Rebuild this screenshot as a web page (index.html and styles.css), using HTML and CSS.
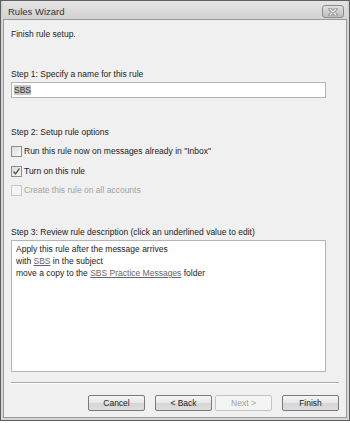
FILE: index.html
```html
<!DOCTYPE html>
<html lang="en">
<head>
  <meta charset="UTF-8">
  <title>Rules Wizard</title>
  <link rel="stylesheet" href="styles.css">
</head>
<body>

  <div class="window">
    <div class="titlebar">
      <div class="title">Rules Wizard</div>
      <div class="close">
        <svg width="10" height="8" viewBox="0 0 10 8">
          <path d="M2 1 L8 7 M8 1 L2 7" stroke="#7a7a7a" stroke-width="3" stroke-linecap="round"/>
          <path d="M2 1 L8 7 M8 1 L2 7" stroke="#ffffff" stroke-width="1.4" stroke-linecap="round"/>
        </svg>
      </div>
    </div>

    <div class="client">
      <div class="intro">Finish rule setup.</div>

      <div class="label step1">Step 1: Specify a name for this rule</div>
      <div class="textbox"><span class="selected">SBS</span></div>

      <div class="label step2">Step 2: Setup rule options</div>
      <div class="check first">
        <span class="box"></span>
        <span>Run this rule now on messages already in "Inbox"</span>
      </div>
      <div class="check">
        <span class="box">
          <svg width="9" height="9" viewBox="0 0 9 9">
            <path d="M1.5 4.5 L3.5 7 L7.5 1.5" stroke="#555" stroke-width="1.3" fill="none"/>
          </svg>
        </span>
        <span>Turn on this rule</span>
      </div>
      <div class="check disabled">
        <span class="box"></span>
        <span>Create this rule on all accounts</span>
      </div>

      <div class="label step3">Step 3: Review rule description (click an underlined value to edit)</div>
      <div class="description">
        <div>Apply this rule after the message arrives</div>
        <div>with <span class="link">SBS</span> in the subject</div>
        <div>move a copy to the <span class="link">SBS Practice Messages</span> folder</div>
      </div>

      <div class="separator"></div>

      <div class="buttons">
        <div class="btn">Cancel</div>
        <div class="btn gap">&lt; Back</div>
        <div class="btn disabled">Next &gt;</div>
        <div class="btn gap">Finish</div>
      </div>
    </div>
  </div>

</body>
</html>
```

FILE: styles.css
```css
body {
  margin: 0;
  background: #ffffff;
  font-family: "Liberation Sans", Arial, sans-serif;
  font-size: 8.5px;
  color: #222;
}
.window {
  box-sizing: border-box;
  width: 350px;
  height: 421px;
  border: 1px solid #5e5e5e;
  background: #d4d4d4;
  padding: 0 2px 2px 2px;
  display: flex;
  flex-direction: column;
}
.titlebar {
  height: 18px;
  display: flex;
  align-items: center;
  justify-content: space-between;
  background: linear-gradient(#e4e4e4, #d2d2d2);
  padding: 0 3px 0 5px;
}
.title {
  font-size: 9.5px;
  color: #333;
  padding-top: 2px;
}
.close {
  width: 20px;
  height: 11px;
  margin-top: 3px;
  border: 1px solid #8c8c8c;
  border-radius: 3px;
  background: linear-gradient(#e0e0e0, #bcbcbc);
  display: flex;
  align-items: center;
  justify-content: center;
}
.client {
  flex: 1;
  background: #f0f0f0;
  border: 1px solid #9a9a9a;
  padding: 8px 8px 0 7px;
  line-height: 12px;
}
.label.step1 {
  margin-top: 28px;
}
.textbox {
  box-sizing: border-box;
  width: 315px;
  height: 16px;
  margin-top: 2px;
  background: #fff;
  border: 1px solid #b4b4b4;
  padding: 1px 2px;
  line-height: 12px;
}
.selected {
  background: #c4c4c4;
  color: #333;
}
.label.step2 {
  margin-top: 28px;
}
.check {
  display: flex;
  align-items: center;
  height: 12px;
  margin-top: 8px;
}
.check.first {
  margin-top: 7px;
}
.check.disabled {
  margin-top: 7px;
  color: #a2a2a2;
}
.box {
  box-sizing: border-box;
  width: 11px;
  height: 11px;
  margin: 0 2px 0 0;
  border: 1px solid #8e8e8e;
  background: linear-gradient(135deg, #dcdcdc, #f8f8f8);
  display: flex;
  align-items: center;
  justify-content: center;
}
.check.disabled .box {
  border-color: #c8c8c8;
  background: #f4f4f4;
}
.label.step3 {
  margin-top: 30px;
}
.description {
  box-sizing: border-box;
  width: 315px;
  height: 132px;
  margin-top: 2px;
  background: #fff;
  border: 1px solid #b4b4b4;
  padding: 2px 4px;
}
.link {
  color: #666;
  text-decoration: underline;
}
.separator {
  margin-top: 10px;
  width: 328px;
  height: 0;
  border-top: 1px solid #a8a8a8;
  border-bottom: 1px solid #ffffff;
}
.buttons {
  display: flex;
  justify-content: flex-end;
  margin-top: 11px;
  width: 328px;
}
.btn {
  box-sizing: border-box;
  width: 57px;
  height: 16px;
  margin-left: 3px;
  border: 1px solid #7a7a7a;
  border-radius: 2px;
  background: linear-gradient(#f6f6f6 0%, #e6e6e6 50%, #d6d6d6 51%, #dcdcdc 100%);
  text-align: center;
  line-height: 14px;
  color: #222;
}
.btn.gap {
  margin-left: 10px;
}
.btn.disabled {
  border-color: #c4c4c4;
  background: #f4f4f4;
  color: #a0a0a0;
}
```
